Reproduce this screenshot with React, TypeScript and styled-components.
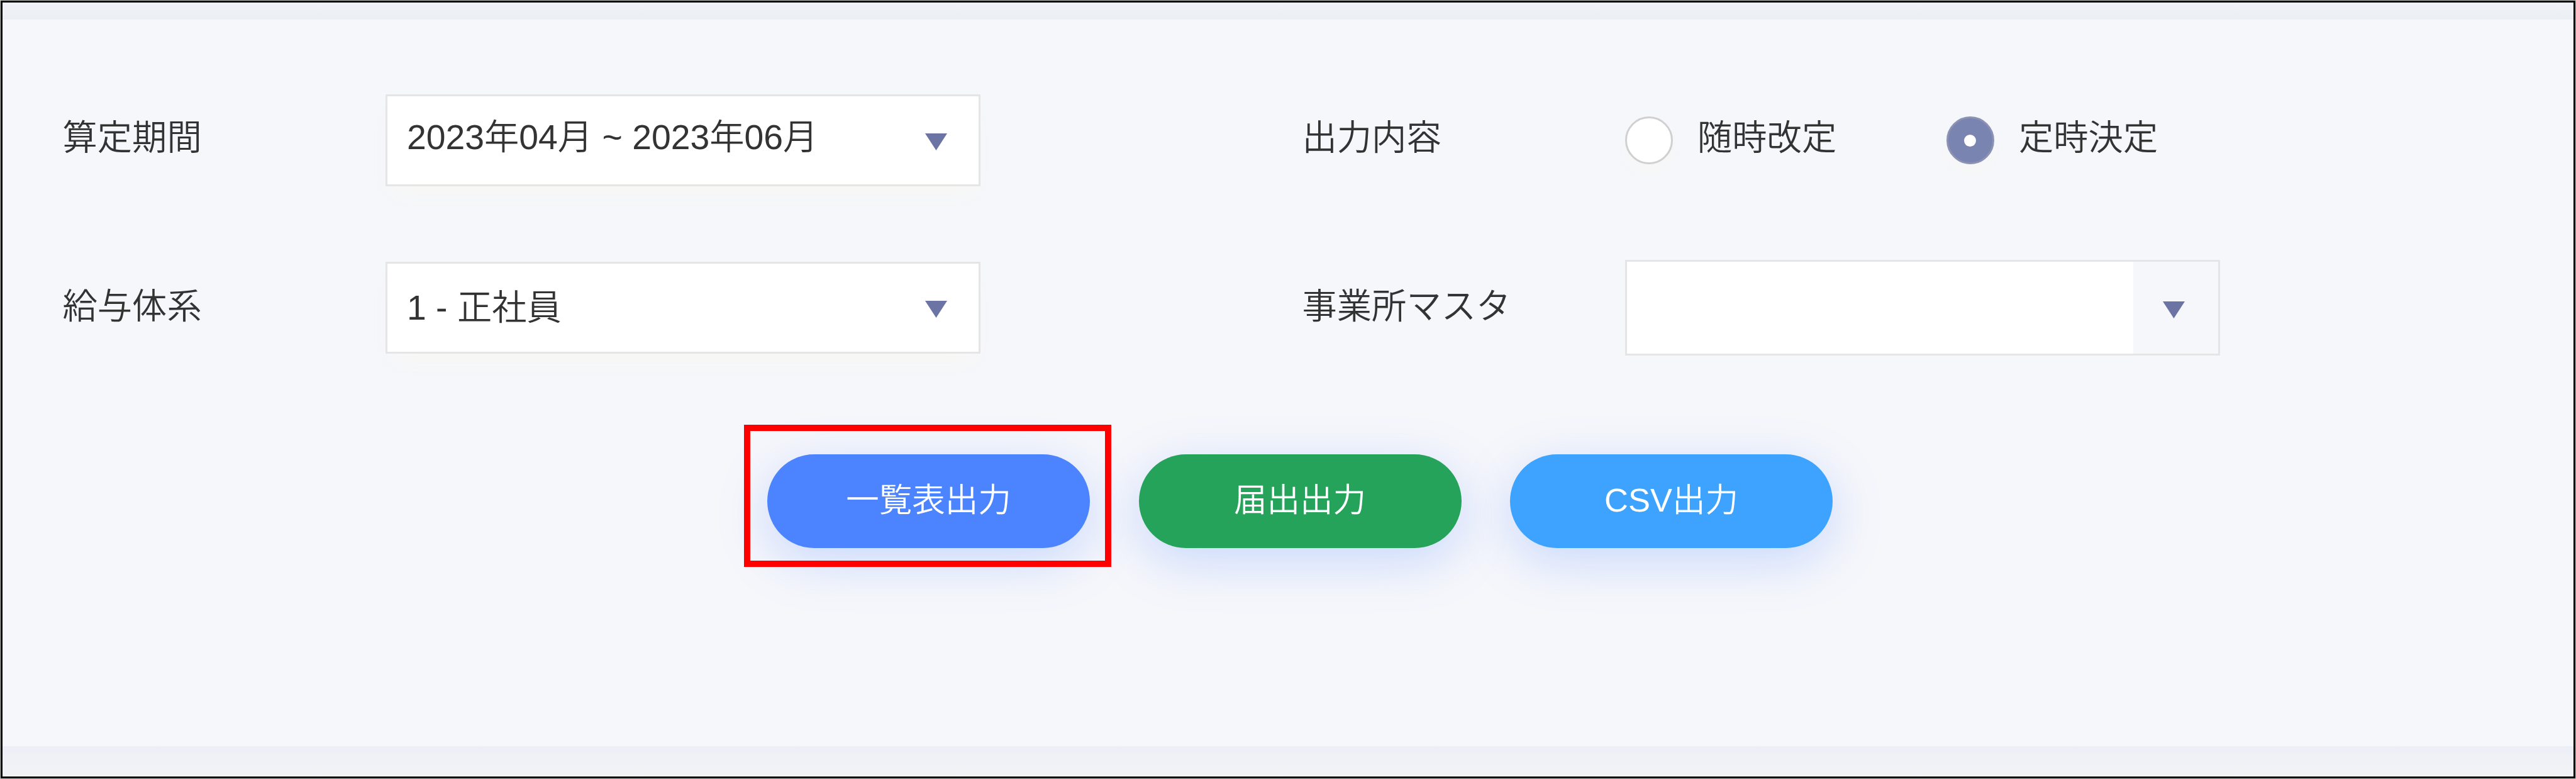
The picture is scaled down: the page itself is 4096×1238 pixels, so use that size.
import styled, { createGlobalStyle } from "styled-components";

const GlobalStyle = createGlobalStyle`
  * {
    box-sizing: border-box;
  }

  body {
    margin: 0;
    color: #333;
    font-family: "Liberation Sans", "Noto Sans CJK JP", sans-serif;
    font-size: 55.3px;
    font-weight: 350;
  }
`;

const Frame = styled.div`
  background: #f6f7fb;
  border: 1px solid #c6cdc8;
  height: 1238px;
  width: 4096px;
`;

const Screen = styled.main`
  border: 3px solid #000;
  display: flex;
  flex-direction: column;
  height: 100%;
`;

const Strip = styled.div<{ edge: "top" | "bottom" }>`
  background: ${({ edge }) =>
    edge === "top"
      ? "linear-gradient(#f1f2f7, #ebeff4)"
      : "linear-gradient(#ebeef8 0, #eff0f5 12px, #f2f3f7)"};
  flex: none;
  height: ${({ edge }) => (edge === "top" ? 27 : 48)}px;
`;

const Panel = styled.section`
  flex: 1;
  padding: 116px 0 0 95.5px;
`;

const FieldRow = styled.div`
  align-items: center;
  display: grid;
  grid-template-columns: 513.5px 1457.5px 513.5px 1fr;
  height: 152px;
  margin-bottom: 114px;
`;

const Label = styled.span<{ lift?: number }>`
  line-height: 80px;
  padding-bottom: ${({ lift = 9 }) => lift}px;
  white-space: nowrap;
`;

const SelectBox = styled.div`
  align-items: center;
  background: #fff;
  border: 3px solid #e5e5e5;
  box-shadow: 0 21px 32px -10px rgba(248, 247, 240, 0.7);
  display: flex;
  height: 146px;
  justify-content: space-between;
  padding: 0 50px 0 31px;
  width: 946px;
`;

const SelectText = styled.span<{ lift?: number }>`
  line-height: 80px;
  padding-bottom: ${({ lift = 0 }) => lift}px;
  white-space: nowrap;
`;

const ComboBox = styled.div`
  border: 3px solid #e5e5e5;
  display: flex;
  height: 152px;
  width: 946px;
`;

const ComboInput = styled.div`
  background: #fff;
  flex: 1;
`;

const ComboToggle = styled.div`
  align-items: center;
  display: flex;
  justify-content: center;
  padding: 7px 6px 0 0;
  width: 135px;
`;

const SelectArrow = styled.span`
  align-items: center;
  display: flex;
  padding-top: 5px;
`;

const RadioGroup = styled.div`
  align-items: center;
  display: flex;
`;

const RadioOption = styled.div`
  align-items: center;
  display: flex;
  gap: 39px;
  width: 511px;
`;

const RadioMark = styled.span<{ checked?: boolean }>`
  align-items: center;
  background: ${({ checked }) => (checked ? "#7a84b0" : "#fff")};
  border: 3px solid ${({ checked }) => (checked ? "#8b92b3" : "#d0d0d0")};
  border-radius: 50%;
  box-shadow: 0 18px 24px -6px rgba(248, 247, 242, 0.7);
  display: flex;
  flex: none;
  height: 76px;
  justify-content: center;
  width: 76px;
`;

const RadioDot = styled.span`
  background: #fff;
  border-radius: 50%;
  height: 19px;
  margin-right: 2px;
  width: 19px;
`;

const Actions = styled.div`
  display: flex;
  gap: 77.5px;
  padding: 43px 0 0 1120.5px;
`;

const ActionItem = styled.div`
  position: relative;
`;

const ActionButton = styled.button<{ color: string }>`
  background: ${({ color }) => color};
  border: none;
  border-radius: 75px;
  box-shadow: 0 21px 79px rgba(76, 132, 255, 0.27);
  color: #fff;
  display: block;
  font: inherit;
  font-size: 52.5px;
  height: 149px;
  line-height: 80px;
  padding: 0 0 3px;
  width: 513px;
`;

const Highlight = styled.div`
  border: 10px solid #f00;
  height: 226px;
  left: -37px;
  position: absolute;
  top: -47px;
  width: 584px;
`;

const Arrow = () => (
  <svg width="35" height="27" viewBox="0 0 35 27" aria-hidden="true">
    <path d="M0 0h35L17.5 27z" fill="#6b74a3" />
  </svg>
);

interface ISelectProps {
  value: string;
  lift?: number;
}

const Select: React.FC<ISelectProps> = ({ value, lift }) => (
  <SelectBox>
    <SelectText lift={lift}>{value}</SelectText>
    <SelectArrow>
      <Arrow />
    </SelectArrow>
  </SelectBox>
);

const actions = [
  { label: "一覧表出力", color: "#4c84ff", highlighted: true },
  { label: "届出出力", color: "#26a35a" },
  { label: "CSV出力", color: "#3da3ff" },
];

const App = () => (
  <>
    <GlobalStyle />
    <Frame>
      <Screen>
        <Strip edge="top" />
        <Panel>
          <FieldRow>
            <Label>算定期間</Label>
            <Select value="2023年04月 ~ 2023年06月" lift={10} />
            <Label>出力内容</Label>
            <RadioGroup>
              <RadioOption>
                <RadioMark />
                <Label>随時改定</Label>
              </RadioOption>
              <RadioOption>
                <RadioMark checked>
                  <RadioDot />
                </RadioMark>
                <Label>定時決定</Label>
              </RadioOption>
            </RadioGroup>
          </FieldRow>
          <FieldRow>
            <Label lift={5}>給与体系</Label>
            <Select value="1 - 正社員" />
            <Label lift={5}>事業所マスタ</Label>
            <ComboBox>
              <ComboInput />
              <ComboToggle>
                <Arrow />
              </ComboToggle>
            </ComboBox>
          </FieldRow>
          <Actions>
            {actions.map(({ label, color, highlighted }) => (
              <ActionItem key={label}>
                <ActionButton type="button" color={color}>
                  {label}
                </ActionButton>
                {highlighted && <Highlight />}
              </ActionItem>
            ))}
          </Actions>
        </Panel>
        <Strip edge="bottom" />
      </Screen>
    </Frame>
  </>
);

export default App;
